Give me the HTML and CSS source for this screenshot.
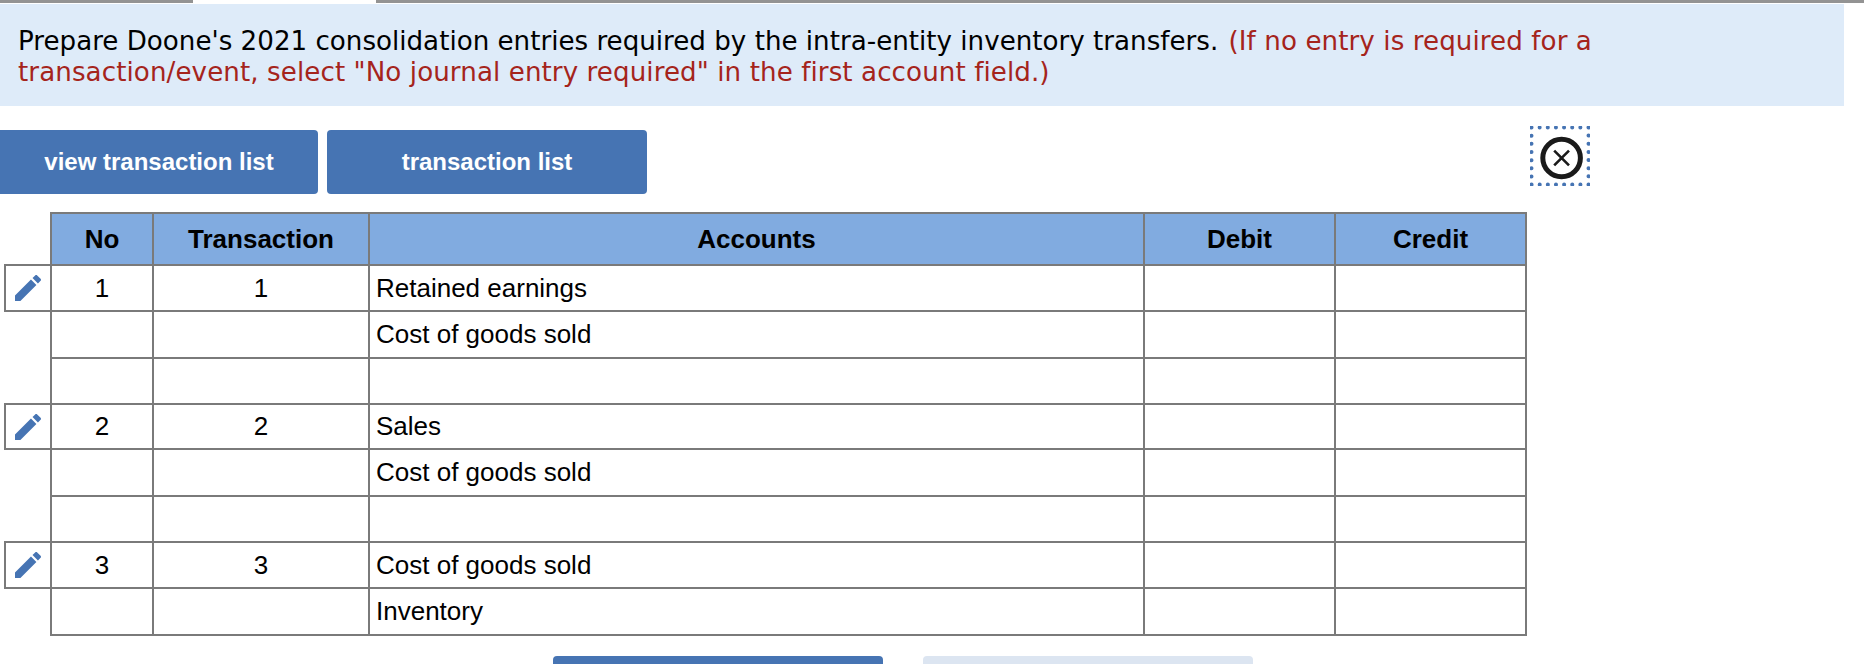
FILE: index.html
```html
<!DOCTYPE html>
<html lang="en">
<head>
    <meta charset="UTF-8">
    <title>Consolidation entries</title>
    <link rel="stylesheet" href="styles.css">
</head>
<body>
    <div class="tabs">
        <div class="tab tab-first"></div>
        <div class="tab tab-active"></div>
        <div class="tab tab-rest"></div>
    </div>
    <div class="prompt">
        <p>Prepare Doone's 2021 consolidation entries required by the intra-entity inventory transfers. <span class="note">(If no entry is required for a transaction/event, select "No journal entry required" in the first account field.)</span></p>
    </div>
    <div class="toolbar">
        <button class="btn btn-view">view transaction list</button>
        <button class="btn btn-list">transaction list</button>
        <a class="close" href="#" aria-label="Close">
            <svg width="60" height="60" viewBox="0 0 60 60">
                <rect x="1.5" y="1.5" width="57" height="57" fill="none" stroke="#4674b3" stroke-width="4" stroke-linecap="round" stroke-dasharray="0 8.14"/>
                <circle cx="31.6" cy="32" r="18.8" fill="none" stroke="#1a1a1a" stroke-width="5"/>
                <path d="M24.2 24.6l14.8 14.8M39 24.6L24.2 39.4" fill="none" stroke="#1a1a1a" stroke-width="2.6"/>
            </svg>
        </a>
    </div>
    <table class="journal">
        <thead>
            <tr>
                <th class="tool"></th>
                <th class="col-no">No</th>
                <th class="col-tr">Transaction</th>
                <th class="col-acc">Accounts</th>
                <th class="col-amt">Debit</th>
                <th class="col-amt">Credit</th>
            </tr>
        </thead>
        <tbody>
            <tr>
                <td class="tool edit"><svg width="26" height="26" viewBox="3 3 18 18"><path fill="#4674b3" d="M3 17.25V21h3.75L17.81 9.94l-3.75-3.75L3 17.25zM20.71 7.04c.39-.39.39-1.02 0-1.41l-2.34-2.34c-.39-.39-1.02-.39-1.41 0l-1.83 1.83 3.75 3.75 1.83-1.83z"/></svg></td>
                <td class="mid">1</td><td class="mid">1</td><td>Retained earnings</td><td></td><td></td>
            </tr>
            <tr class="tall">
                <td class="tool"></td>
                <td></td><td></td><td>Cost of goods sold</td><td></td><td></td>
            </tr>
            <tr>
                <td class="tool"></td>
                <td></td><td></td><td></td><td></td><td></td>
            </tr>
            <tr class="short">
                <td class="tool edit"><svg width="26" height="26" viewBox="3 3 18 18"><path fill="#4674b3" d="M3 17.25V21h3.75L17.81 9.94l-3.75-3.75L3 17.25zM20.71 7.04c.39-.39.39-1.02 0-1.41l-2.34-2.34c-.39-.39-1.02-.39-1.41 0l-1.83 1.83 3.75 3.75 1.83-1.83z"/></svg></td>
                <td class="mid">2</td><td class="mid">2</td><td>Sales</td><td></td><td></td>
            </tr>
            <tr class="tall">
                <td class="tool"></td>
                <td></td><td></td><td>Cost of goods sold</td><td></td><td></td>
            </tr>
            <tr>
                <td class="tool"></td>
                <td></td><td></td><td></td><td></td><td></td>
            </tr>
            <tr>
                <td class="tool edit"><svg width="26" height="26" viewBox="3 3 18 18"><path fill="#4674b3" d="M3 17.25V21h3.75L17.81 9.94l-3.75-3.75L3 17.25zM20.71 7.04c.39-.39.39-1.02 0-1.41l-2.34-2.34c-.39-.39-1.02-.39-1.41 0l-1.83 1.83 3.75 3.75 1.83-1.83z"/></svg></td>
                <td class="mid">3</td><td class="mid">3</td><td>Cost of goods sold</td><td></td><td></td>
            </tr>
            <tr class="tall">
                <td class="tool"></td>
                <td></td><td></td><td>Inventory</td><td></td><td></td>
            </tr>
        </tbody>
    </table>
    <div class="pager">
        <button class="page page-on"></button>
        <button class="page page-off"></button>
    </div>
</body>
</html>
```

FILE: styles.css
```css
html, body {
    height: 664px;
    overflow: hidden;
}
body {
    margin: 0;
    background: #fff;
    color: #000;
    font-family: 'Liberation Sans', Arial, sans-serif;
}
.tabs {
    display: flex;
    height: 4px;
}
.tab {
    height: 3px;
    background: #939393;
}
.tab-first {
    width: 193px;
}
.tab-active {
    width: 183px;
    background: #fff;
}
.tab-rest {
    flex: 1;
}
.prompt {
    background: #deebf9;
    width: 1844px;
    height: 102px;
    padding: 22px 18px 0;
    box-sizing: border-box;
}
.prompt p {
    margin: 0;
    max-width: 1640px;
    font-family: 'DejaVu Sans', Verdana, sans-serif;
    font-size: 26.15px;
    line-height: 31px;
}
.note {
    color: #a5241c;
    letter-spacing: 0.08px;
    margin-left: 2px;
}
.toolbar {
    display: flex;
    width: 1590px;
    height: 64px;
    margin-top: 24px;
}
.btn {
    height: 64px;
    border: none;
    border-radius: 4px;
    background: #4674b3;
    color: #fff;
    font-family: inherit;
    font-size: 24px;
    font-weight: bold;
    padding: 0;
}
.btn-view {
    width: 318px;
    border-radius: 0 4px 4px 0;
}
.btn-list {
    width: 320px;
    margin-left: 9px;
}
.close {
    display: block;
    width: 60px;
    height: 60px;
    margin-left: auto;
    margin-top: -4px;
}
.close svg {
    display: block;
}
.journal {
    border-collapse: collapse;
    table-layout: fixed;
    width: 1522px;
    margin: 18px 0 0 4px;
    font-size: 26px;
}
.journal th, .journal td {
    border: 2px solid #7a7a7a;
    padding: 0 6px;
    height: 46px;
    box-sizing: border-box;
}
.journal th {
    background: #81abe0;
    height: 52px;
    font-weight: bold;
    text-align: center;
}
.journal .tall td {
    height: 47px;
}
.journal .short td {
    height: 45px;
}
.journal .tool {
    width: 46px;
    padding: 0;
    background: none;
    border: none;
    border-right: 2px solid #7a7a7a;
    text-align: center;
}
.journal .edit {
    border: 2px solid #7a7a7a;
}
.edit svg {
    display: block;
    margin: 0 auto;
}
.col-no {
    width: 102px;
}
.col-tr {
    width: 216px;
}
.col-acc {
    width: 775px;
}
.col-amt {
    width: 191px;
}
.mid {
    text-align: center;
}
.pager {
    display: flex;
    gap: 40px;
    margin: 20px 0 0 553px;
}
.page {
    width: 330px;
    height: 60px;
    border: none;
    border-radius: 4px;
}
.page-on {
    background: #4674b3;
}
.page-off {
    background: #dce5f1;
}
```
